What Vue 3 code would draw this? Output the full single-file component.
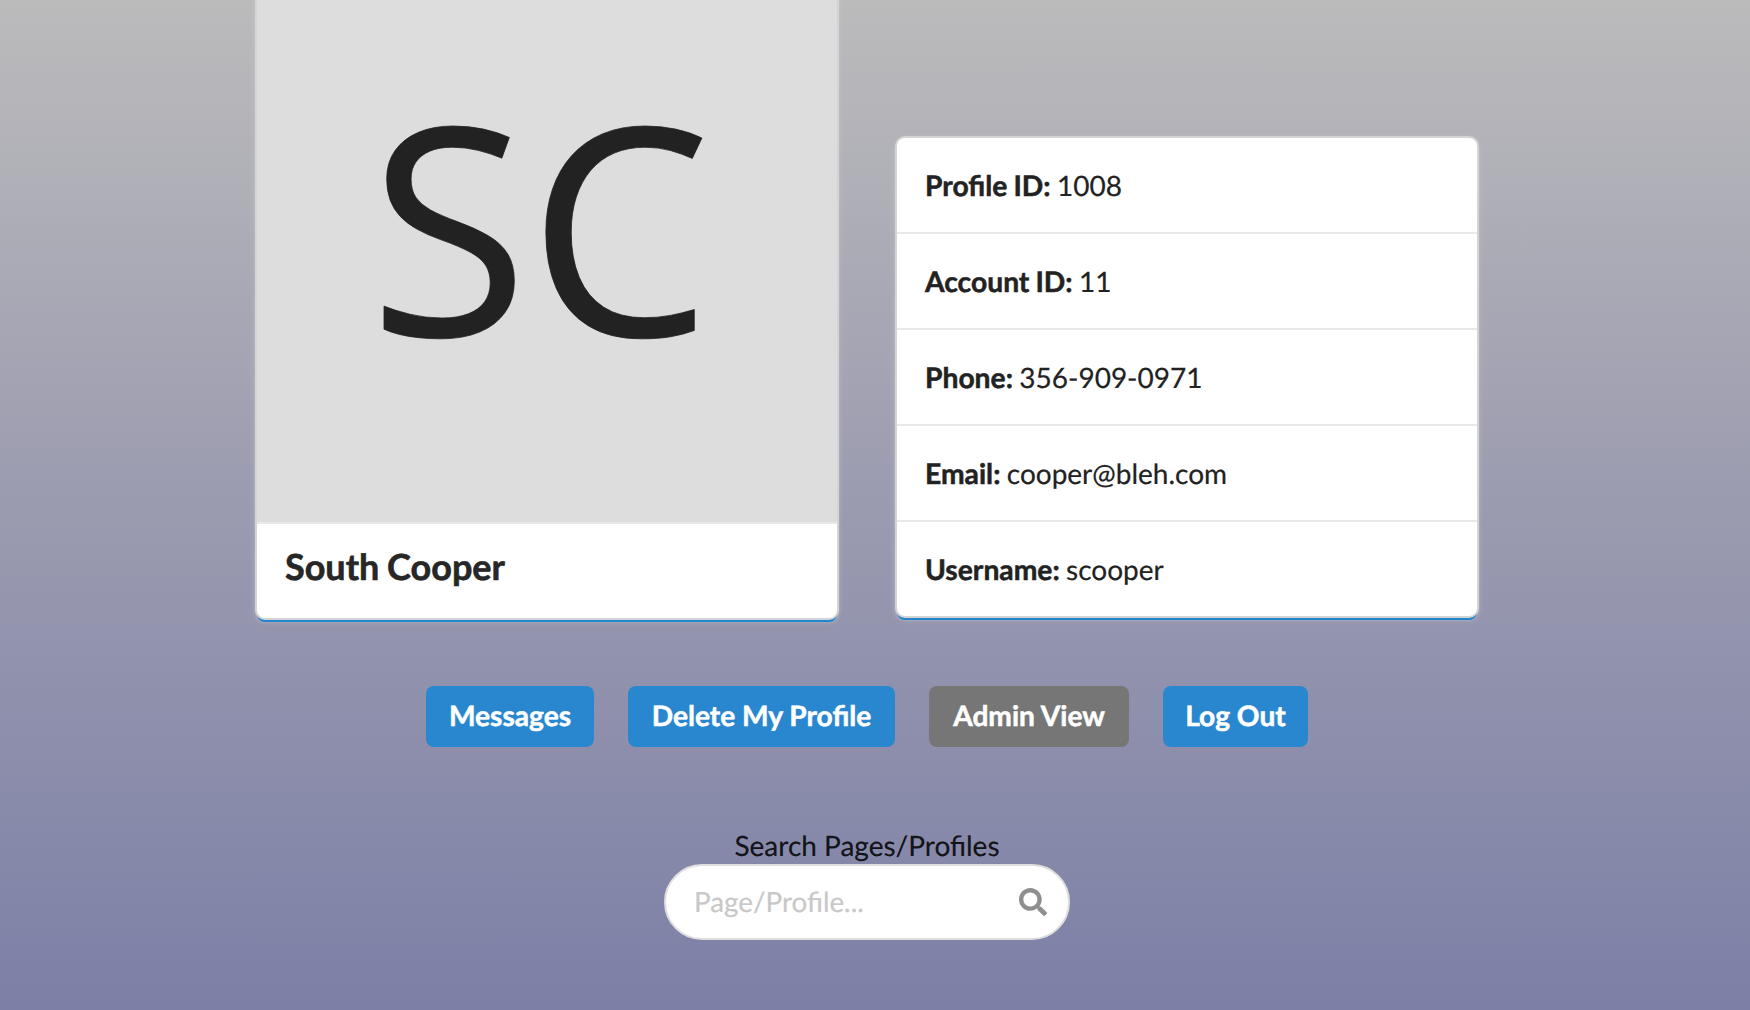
<script setup>
const details = [
  { label: 'Profile ID:', value: '1008' },
  { label: 'Account ID:', value: '11' },
  { label: 'Phone:', value: '356-909-0971' },
  { label: 'Email:', value: 'cooper@bleh.com' },
  { label: 'Username:', value: 'scooper' },
]
const actions = [
  { text: 'Messages', tone: 'blue', size: 'messages' },
  { text: 'Delete My Profile', tone: 'blue', size: 'delete' },
  { text: 'Admin View', tone: 'grey', size: 'admin' },
  { text: 'Log Out', tone: 'blue', size: 'logout' },
]
</script>

<template>
  <main class="page">
    <section class="cards">
      <article class="card profile">
        <div class="avatar"><span>SC</span></div>
        <div class="content"><h1>South Cooper</h1></div>
      </article>
      <article class="card details">
        <div v-for="d in details" :key="d.label" class="row">
          <b>{{ d.label }}</b> {{ d.value }}
        </div>
      </article>
    </section>

    <nav class="actions">
      <button v-for="a in actions" :key="a.text" type="button" :class="['btn', a.tone, a.size]">{{ a.text }}</button>
    </nav>

    <label class="search-label" for="search">Search Pages/Profiles</label>
    <div class="search">
      <input id="search" type="text" placeholder="Page/Profile..." />
      <svg class="icon" viewBox="0 0 512 512" aria-hidden="true">
        <path d="M505 442.700L405.300 343c-4.500-4.500-10.600-7-17-7H372c27.600-35.300 44-79.700 44-128C416 93.100 322.900 0 208 0S0 93.100 0 208s93.100 208 208 208c48.300 0 92.700-16.400 128-44v16.300c0 6.400 2.500 12.500 7 17l99.700 99.700c9.400 9.400 24.600 9.400 33.900 0l28.300-28.300c9.400-9.400 9.400-24.600.1-34zM208 336c-70.700 0-128-57.200-128-128 0-70.700 57.200-128 128-128 70.700 0 128 57.200 128 128 0 70.700-57.200 128-128 128z" />
      </svg>
    </div>
  </main>
</template>

<style>
body {
  overflow: hidden;
}
</style>

<style scoped>
.page {
  box-sizing: border-box;
  width: 1750px;
  height: 1010px;
  padding-right: 16px;
  overflow: hidden;
  display: flex;
  flex-direction: column;
  align-items: center;
  background: linear-gradient(#bbbbbc 0%, #9b9bb0 50%, #7c80a6 100%);
  color: rgba(0, 0, 0, 0.87);
  font-family: Lato, sans-serif;
  font-size: 28px;
  line-height: 40px;
  text-rendering: geometricPrecision;
  -webkit-text-stroke: 0.2px currentColor;
}
.cards {
  display: flex;
  align-items: flex-end;
  gap: 60px;
  margin-top: -58px;
  flex: none;
}
.card {
  width: 580px;
  background: #fff;
  border-radius: 8px;
  box-shadow: 0 0 0 2px #d4d4d5, 0 4px 0 0 #2185d0, 0 2px 6px 0 #d4d4d5;
}
.details {
  margin-bottom: 2px;
}
.avatar {
  box-sizing: border-box;
  height: 580px;
  padding: 0 14px 17px 0;
  display: flex;
  align-items: center;
  justify-content: center;
  background: #ddd;
  color: #222;
  font: 290px/1 "Open Sans", sans-serif;
  -webkit-text-stroke: 0.8px #222;
}
.content {
  box-sizing: border-box;
  height: 96px;
  padding: 22px 28px;
  border-top: 2px solid #e8e8e9;
}
h1 {
  margin: 0;
  font-size: 36px;
  line-height: 40px;
  font-weight: 700;
  word-spacing: -1px;
  -webkit-text-stroke: 0.6px #222;
}
.row {
  box-sizing: border-box;
  height: 96px;
  padding: 27px 28px;
  border-top: 2px solid #e8e8e9;
  color: #222;
  word-spacing: -0.8px;
}
.row:first-child {
  height: 94px;
  border-top: 0;
}
b {
  font-size: 28.25px;
  -webkit-text-stroke: 0.5px #222;
}
.actions {
  display: flex;
  gap: 34px;
  margin-top: 68px;
}
.btn {
  height: 61px;
  padding: 0 0 4px;
  border: 0;
  border-radius: 8px;
  color: #fff;
  font: 700 28.15px/28px Lato, sans-serif;
  text-rendering: inherit;
  -webkit-text-stroke: 0.5px #fff;
}
.blue { background: #2987cf; }
.grey { background: #767676; }
.messages { width: 168px; }
.delete { width: 267px; }
.admin { width: 200px; }
.logout { width: 145px; }
.search-label {
  margin-top: 78px;
}
.search {
  box-sizing: border-box;
  display: flex;
  align-items: center;
  width: 406px;
  height: 76px;
  margin-top: -1px;
  padding: 0 21px 0 28px;
  border: 2px solid #dededf;
  border-radius: 38px;
  background: #fff;
}
input {
  flex: 1;
  min-width: 0;
  padding: 0;
  border: 0;
  outline: 0;
  background: none;
  font: 27.8px/34px Lato, sans-serif;
  text-rendering: inherit;
}
input::placeholder {
  color: #c8c8c8;
  opacity: 1;
}
.icon {
  width: 28px;
  height: 28px;
  margin-bottom: 1px;
  fill: #8f8f8f;
}
</style>
